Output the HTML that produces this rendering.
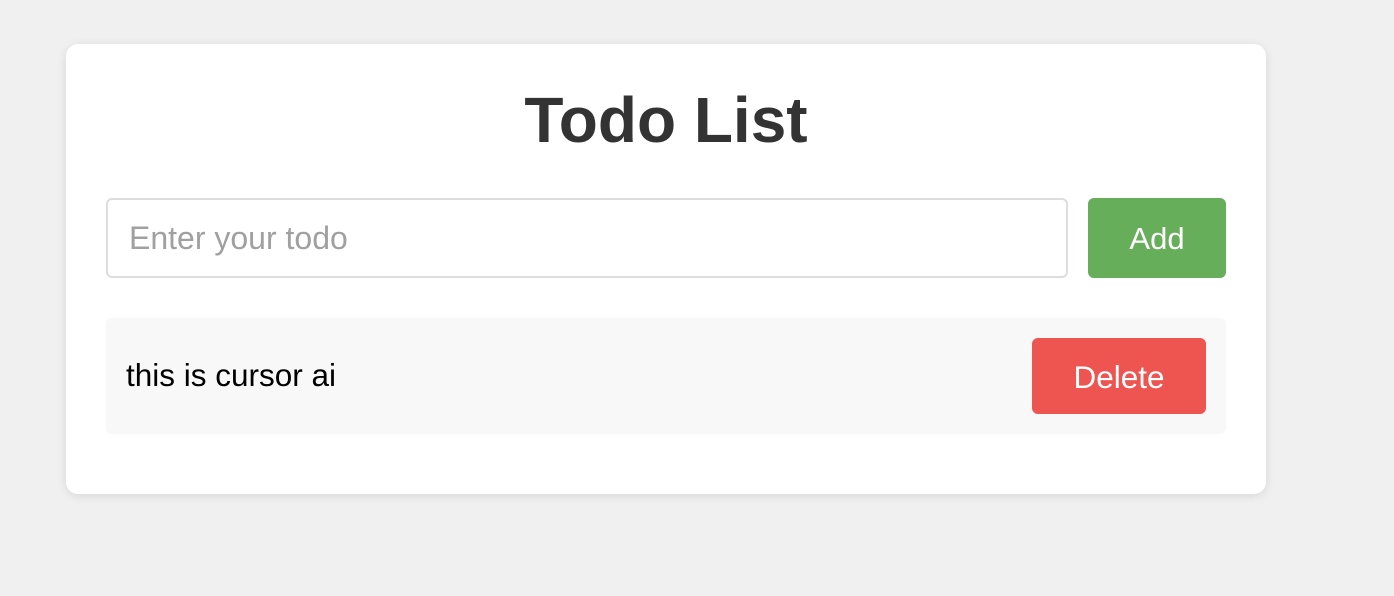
<!DOCTYPE html>
<html><head><meta charset="utf-8"><style>
body{margin:0;background:#f0f0f0;font-family:"Liberation Sans",Arial,sans-serif;width:1394px;height:596px;overflow:hidden;position:relative}
.card{position:absolute;left:66px;top:44px;width:1200px;height:450px;background:#fff;border-radius:12px;box-shadow:0 2px 10px rgba(0,0,0,0.1)}
h1{position:absolute;left:66px;width:1200px;top:84px;margin:0;text-align:center;font-size:64px;font-weight:bold;color:#333;line-height:72px}
.input{position:absolute;left:106px;top:198px;width:958px;height:76px;border:2px solid #ddd;border-radius:6px}
.input span{position:absolute;left:21px;top:20px;font-size:32px;color:#a0a0a0}
.add{position:absolute;left:1088px;top:198px;width:138px;height:80px;background:#67ae5b;border-radius:6px;color:#fff;font-size:31px;text-align:center;line-height:82px}
.item{position:absolute;left:106px;top:318px;width:1120px;height:116px;background:#f8f8f8;border-radius:6px}
.t{position:absolute;left:126px;top:357px;font-size:31.5px;color:#000}
.del{position:absolute;left:1032px;top:338px;width:174px;height:76px;background:#ee5450;border-radius:6px;color:#fff;font-size:31.5px;text-align:center;line-height:78px}
</style></head><body>
<div class="card"></div>
<h1>Todo List</h1>
<div class="input"><span>Enter your todo</span></div>
<div class="add">Add</div>
<div class="item"></div>
<div class="t">this is cursor ai</div>
<div class="del">Delete</div>
</body></html>
